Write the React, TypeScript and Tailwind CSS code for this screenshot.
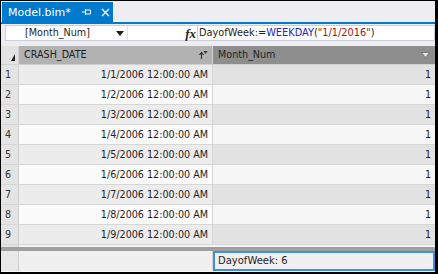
import React from 'react';

const rows = [1, 2, 3, 4, 5, 6, 7, 8, 9];

function PinIcon() {
  return (
    <svg width="9" height="8" viewBox="0 0 9 8" className="block">
      <path d="M0 4H3M3.5 1V7M3.5 2H8.5V6H3.5" stroke="white" strokeWidth="1" fill="none" />
    </svg>
  );
}

function CloseIcon() {
  return (
    <svg width="9" height="9" viewBox="0 0 9 9" className="block">
      <path d="M1 1L8 8M8 1L1 8" stroke="white" strokeWidth="1.3" />
    </svg>
  );
}

function SortIcon() {
  return (
    <svg width="9" height="10" viewBox="0 0 9 10" className="block">
      <path d="M2.5 9V3M0.5 5L2.5 2.5L4.5 5" stroke="#333" strokeWidth="1.2" fill="none" />
      <path d="M4.5 1H8.5L6.5 4Z" fill="#333" />
    </svg>
  );
}

export default function App() {
  return (
    <div
      className="w-[438px] h-[274px] overflow-hidden flex flex-col bg-[#eeeef2] border-black border-t border-l border-r-[3px] border-b-2 text-[#1e1e1e]"
      style={{ fontFamily: '"DejaVu Sans", Verdana, sans-serif' }}
    >
      {/* tab strip */}
      <div className="h-[21px] flex items-end pl-[1px]">
        <div className="w-[111px] h-[20px] bg-[#007acc] text-white flex items-center pl-[6px]">
          <span className="text-[11px] leading-none">Model.bim*</span>
          <span className="ml-[11px]">
            <PinIcon />
          </span>
          <span className="ml-[10px]">
            <CloseIcon />
          </span>
        </div>
      </div>
      <div className="h-[2px] bg-[#007acc]" />

      {/* formula bar */}
      <div className="h-[22px] pt-[1px] pl-[4px]">
        <div className="h-[16px] bg-white border border-[#cccedb] flex items-center">
          <div className="w-[122px] h-full flex items-center border-r border-[#e4e4e4]">
            <span className="ml-[19px] text-[9.6px] leading-none">[Month_Num]</span>
            <svg width="8" height="5" viewBox="0 0 8 5" className="ml-[26px]">
              <path d="M0 0H8L4 5Z" fill="#1e1e1e" />
            </svg>
          </div>
          <div className="flex-1" />
          <span
            className="text-[13px] leading-none italic font-bold pr-[1px] border-r border-[#cccccc] h-full flex items-center"
            style={{ fontFamily: '"Liberation Serif", serif' }}
          >
            fx
          </span>
          <div className="w-[236px] pl-[1px] text-[9.8px] leading-none whitespace-nowrap">
            <span>DayofWeek:=</span>
            <span className="text-[#2424c8]">WEEKDAY</span>
            <span>(</span>
            <span className="text-[#a31515]">"1/1/2016"</span>
            <span>)</span>
          </div>
        </div>
      </div>

      {/* grid */}
      <div className="flex-1 flex flex-col bg-[#f7f7f7] text-[9.6px] leading-none">
        {/* header */}
        <div className="h-[19px] flex border-b border-[#d0d0d0]">
          <div className="w-[18px] bg-[#e2e2e2] border-r border-[#d0d0d0] flex items-end justify-end pr-[3px] pb-[3px]">
            <svg width="4" height="7" viewBox="0 0 4 7">
              <path d="M4 0V7H0Z" fill="#1e1e1e" />
            </svg>
          </div>
          <div className="w-[194px] bg-[#b2b2b2] border-r border-[#d0d0d0] flex items-center pl-[5px] pr-[4px]">
            <span className="flex-1">CRASH_DATE</span>
            <SortIcon />
          </div>
          <div className="flex-1 bg-[#8e8e8e] flex items-center pl-[5px] pr-[5px]">
            <span className="flex-1">Month_Num</span>
            <svg width="9" height="6" viewBox="0 0 9 6">
              <path d="M0.5 0.5H8.5L4.5 5.5Z" fill="#e8e8e8" stroke="#6a6a6a" strokeWidth="0.8" />
            </svg>
          </div>
        </div>

        {/* rows */}
        {rows.map((n) => {
          const odd = n % 2 === 1;
          return (
            <div key={n} className="h-[20px] flex border-b border-[#d6d6d6]">
              <div className="w-[18px] bg-[#e4e4e4] border-r border-[#d0d0d0] flex items-center pl-[4px] text-[#333]">
                {n}
              </div>
              <div
                className={`w-[194px] border-r border-[#d6d6d6] flex items-center justify-end pr-[4px] ${
                  odd ? 'bg-[#ececec]' : 'bg-[#fbfbfb]'
                }`}
              >
                1/{n}/2006 12:00:00 AM
              </div>
              <div
                className={`flex-1 flex items-center justify-end pr-[4px] ${
                  odd ? 'bg-[#e2e2e2]' : 'bg-[#f6f6f6]'
                }`}
              >
                1
              </div>
            </div>
          );
        })}

        <div className="h-[2px] flex">
          <div className="w-[18px] bg-[#e4e4e4] border-r border-[#d0d0d0]" />
          <div className="flex-1 bg-[#f4f4f4]" />
        </div>
        <div className="h-[4px] bg-[#a0a0a0]" />

        {/* measure grid */}
        <div className="h-[20px] flex">
          <div className="w-[18px] bg-[#e8e8e8] border-r border-[#d0d0d0]" />
          <div className="w-[194px] bg-[#f0f0f0] border-r border-[#d6d6d6]" />
          <div className="flex-1 bg-[#f0f0f0] border-2 border-[#3d8fe0] flex items-center pl-[3px] text-[10px]">
            DayofWeek: 6
          </div>
        </div>
      </div>
    </div>
  );
}
